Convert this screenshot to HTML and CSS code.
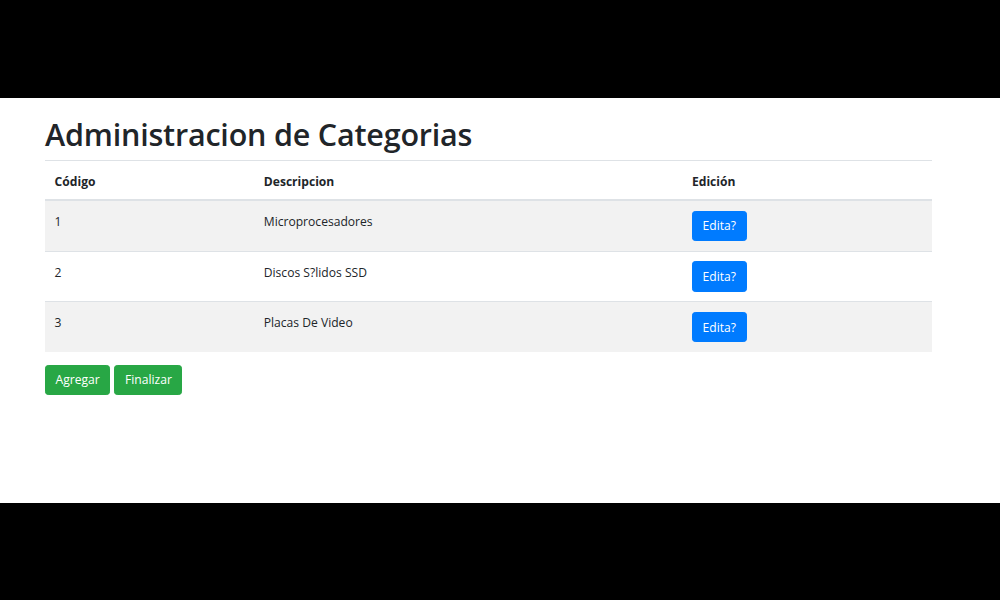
FILE: index.html
```html
<!DOCTYPE html>
<html lang="es">
<head>
<meta charset="utf-8">
<title>Administracion de Categorias</title>
<link rel="stylesheet" href="styles.css">
</head>
<body>
<div class="bar-top"></div>
<main class="page">
  <div class="container">
    <h1 class="title">Administracion de Categorias</h1>
    <table class="table">
      <thead>
        <tr>
          <th class="col-code">Código</th>
          <th class="col-desc">Descripcion</th>
          <th class="col-edit">Edición</th>
        </tr>
      </thead>
      <tbody>
        <tr class="odd">
          <td>1</td>
          <td>Microprocesadores</td>
          <td class="cell-btn"><button class="btn btn-primary">Edita?</button></td>
        </tr>
        <tr>
          <td>2</td>
          <td>Discos S?lidos SSD</td>
          <td class="cell-btn"><button class="btn btn-primary">Edita?</button></td>
        </tr>
        <tr class="odd">
          <td>3</td>
          <td>Placas De Video</td>
          <td class="cell-btn"><button class="btn btn-primary">Edita?</button></td>
        </tr>
      </tbody>
    </table>
    <div class="actions">
      <button class="btn btn-success">Agregar</button>
      <button class="btn btn-success">Finalizar</button>
    </div>
  </div>
</main>
<div class="bar-bottom"></div>
</body>
</html>
```
FILE: styles.css
```css
html, body {
  margin: 0;
  padding: 0;
  height: 100%;
  background: #000;
}
body {
  display: flex;
  flex-direction: column;
  font-family: "Open Sans", "Noto Sans", sans-serif;
  font-size: 12.1px;
  line-height: 19.2px;
  color: #212529;
}
.bar-top {
  height: 98px;
  flex: none;
}
.page {
  height: 405px;
  flex: none;
  background: #fff;
}
.bar-bottom {
  flex: 1;
}
.container {
  width: 887px;
  margin-left: 45px;
  padding-top: 17px;
}
.title {
  margin: 0 0 6.4px;
  font-size: 30.5px;
  font-weight: 600;
  line-height: 38.4px;
  letter-spacing: -0.2px;
}
.table {
  width: 100%;
  border-collapse: collapse;
  margin-bottom: 12.8px;
}
.table th,
.table td {
  padding: 11px 9.6px 8.2px;
  text-align: left;
  vertical-align: top;
  border-top: 1px solid #dee2e6;
}
.table td.cell-btn {
  padding: 9.6px;
}
.table th {
  font-weight: 700;
}
.table thead th {
  border-bottom: 2px solid #dee2e6;
  vertical-align: bottom;
}
.col-code { width: 190px; }
.col-desc { width: 409px; }
.table tbody tr.odd {
  background: #f2f2f2;
}
.btn {
  display: inline-block;
  font-family: inherit;
  font-size: 12.1px;
  line-height: 19.2px;
  padding: 4.6px 9.6px;
  border: 1px solid transparent;
  border-radius: 3.2px;
  color: #fff;
  cursor: pointer;
}
.btn-primary {
  background: #007bff;
  border-color: #007bff;
}
.btn-success {
  background: #28a745;
  border-color: #28a745;
}
.actions {
  display: flex;
  gap: 4px;
}
```
